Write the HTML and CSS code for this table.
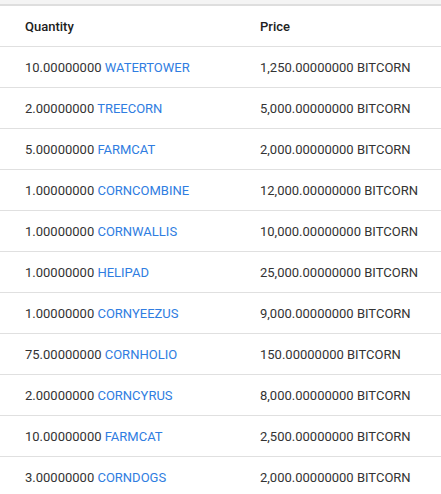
FILE: index.html
```html
<!DOCTYPE html>
<html>
<head>
<meta charset="utf-8">
<link rel="stylesheet" href="styles.css">
</head>
<body>
<div class="topbar"></div>
<table class="orders">
  <thead>
    <tr><th class="qty">Quantity</th><th class="price">Price</th></tr>
  </thead>
  <tbody>
    <tr><td class="qty">10.00000000 <a href="#">WATERTOWER</a></td><td class="price">1,250.00000000 BITCORN</td></tr>
    <tr><td class="qty">2.00000000 <a href="#">TREECORN</a></td><td class="price">5,000.00000000 BITCORN</td></tr>
    <tr><td class="qty">5.00000000 <a href="#">FARMCAT</a></td><td class="price">2,000.00000000 BITCORN</td></tr>
    <tr><td class="qty">1.00000000 <a href="#">CORNCOMBINE</a></td><td class="price">12,000.00000000 BITCORN</td></tr>
    <tr><td class="qty">1.00000000 <a href="#">CORNWALLIS</a></td><td class="price">10,000.00000000 BITCORN</td></tr>
    <tr><td class="qty">1.00000000 <a href="#">HELIPAD</a></td><td class="price">25,000.00000000 BITCORN</td></tr>
    <tr><td class="qty">1.00000000 <a href="#">CORNYEEZUS</a></td><td class="price">9,000.00000000 BITCORN</td></tr>
    <tr><td class="qty">75.00000000 <a href="#">CORNHOLIO</a></td><td class="price">150.00000000 BITCORN</td></tr>
    <tr><td class="qty">2.00000000 <a href="#">CORNCYRUS</a></td><td class="price">8,000.00000000 BITCORN</td></tr>
    <tr><td class="qty">10.00000000 <a href="#">FARMCAT</a></td><td class="price">2,500.00000000 BITCORN</td></tr>
    <tr><td class="qty">3.00000000 <a href="#">CORNDOGS</a></td><td class="price">2,000.00000000 BITCORN</td></tr>
  </tbody>
</table>
</body>
</html>
```

FILE: styles.css
```css
html, body {
  margin: 0;
  padding: 0;
  background: #fff;
}
body {
  font-family: Roboto, "Liberation Sans", Arial, sans-serif;
  font-size: 13px;
  color: #333;
}
.topbar {
  height: 4px;
  background: #f4f4f4;
  border-bottom: 2px solid #dedede;
}
.orders {
  width: 100%;
  border-collapse: collapse;
}
.orders th {
  height: 40px;
  text-align: left;
  font-weight: 500;
  color: #212121;
  border-bottom: 1px solid #e0e0e0;
  padding: 0;
  vertical-align: middle;
}
.orders td {
  height: 40px;
  padding: 0;
  border-bottom: 1px solid #e0e0e0;
  vertical-align: middle;
  white-space: nowrap;
}
.orders .qty {
  width: 235px;
  padding-left: 25px;
}
.orders a {
  color: #2f7de1;
  text-decoration: none;
}
```
